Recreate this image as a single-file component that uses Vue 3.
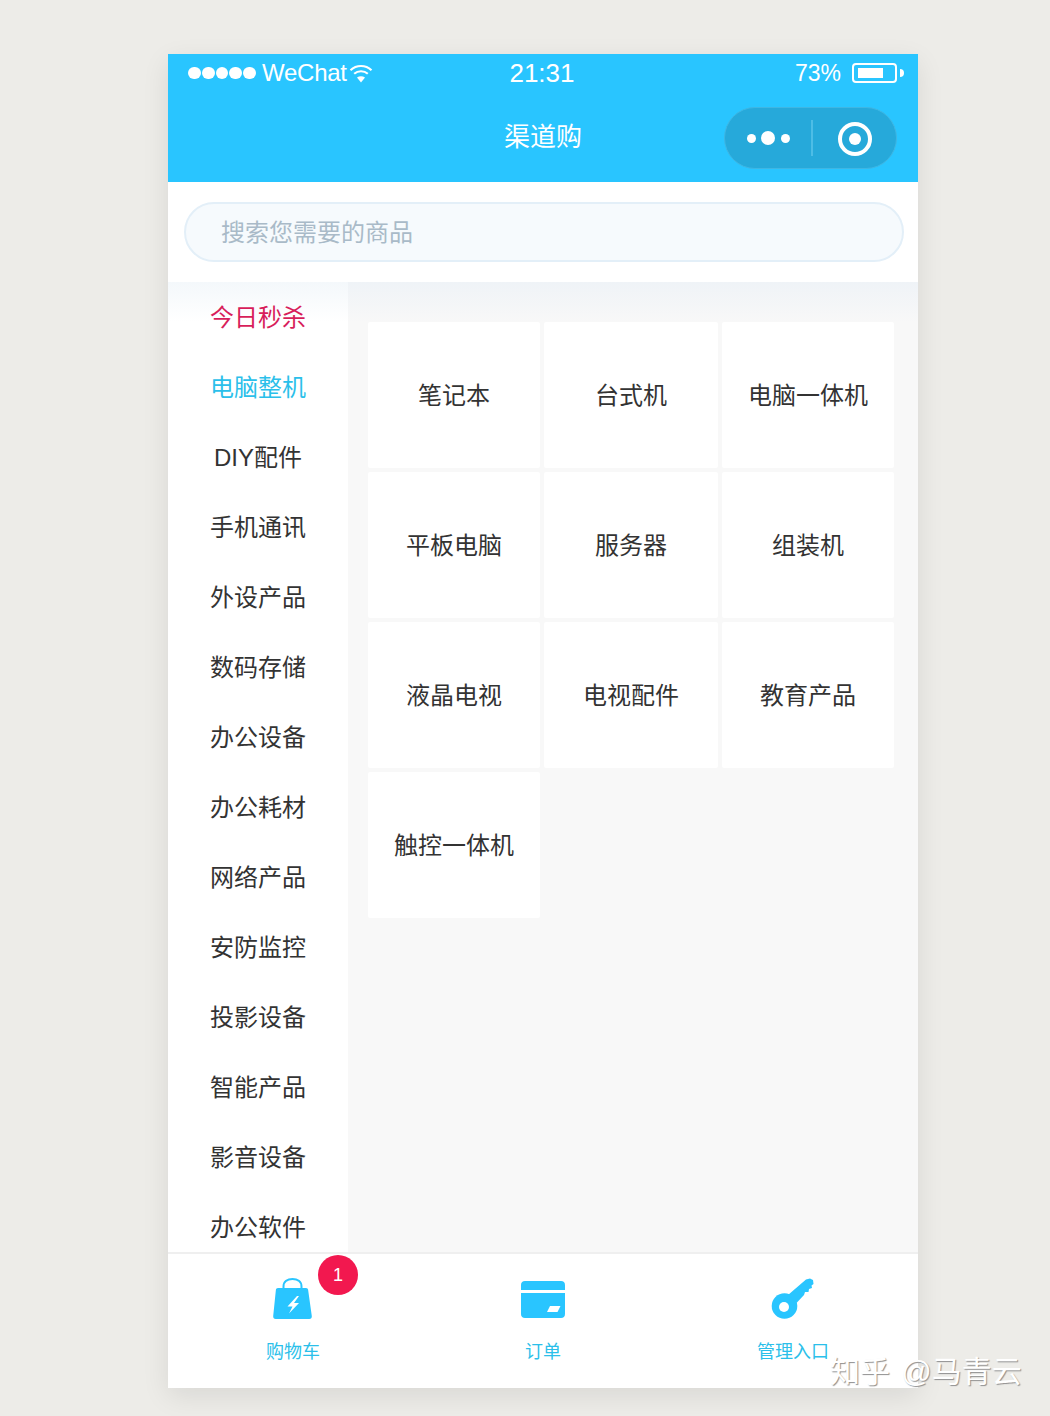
<script setup>
const categories = ['今日秒杀','电脑整机','DIY配件','手机通讯','外设产品','数码存储','办公设备','办公耗材','网络产品','安防监控','投影设备','智能产品','影音设备','办公软件']
const products = ['笔记本','台式机','电脑一体机','平板电脑','服务器','组装机','液晶电视','电视配件','教育产品','触控一体机']
</script>

<template>
  <div class="page">
    <div class="phone">
      <header class="header">
        <div class="status">
          <div class="status-left">
            <span class="signal"><i></i><i></i><i></i><i></i><i></i></span>
            <span class="carrier">WeChat</span>
            <svg class="wifi" width="24" height="20" viewBox="0 0 24 20">
              <path d="M1.5 7.2C7.5 1.6 16.5 1.6 22.5 7.2" fill="none" stroke="#fff" stroke-width="2.2"/>
              <path d="M5.2 10.8C9 7.4 15 7.4 18.8 10.8" fill="none" stroke="#fff" stroke-width="2.2"/>
              <path d="M12 19.5L8 14.6C10.4 12.8 13.6 12.8 16 14.6Z" fill="#fff"/>
            </svg>
          </div>
          <div class="time">21:31</div>
          <div class="status-right">
            <span class="percent">73%</span>
            <span class="battery"><span class="battery-fill"></span></span>
            <span class="battery-tip"></span>
          </div>
        </div>
        <div class="nav">
          <div class="title">渠道购</div>
          <div class="capsule">
            <span class="dots"><i></i><i class="big"></i><i></i></span>
            <span class="divider"></span>
            <span class="ring"><i></i></span>
          </div>
        </div>
      </header>

      <div class="search-wrap">
        <div class="search">搜索您需要的商品</div>
      </div>

      <main class="body">
        <aside class="sidebar">
          <div
            v-for="(c, i) in categories"
            :key="c"
            class="cat"
            :class="{ hot: i === 0, active: i === 1 }"
          >{{ c }}</div>
        </aside>
        <section class="content">
          <div class="grid">
            <div v-for="p in products" :key="p" class="cell">{{ p }}</div>
          </div>
        </section>
      </main>

      <footer class="tabs">
        <div class="tab">
          <div class="icon-wrap">
            <svg width="40" height="44" viewBox="0 0 40 44">
              <path d="M10.500 11.500V9.500C10.500 4.500 14.500 2 19.500 2S28.500 4.500 28.500 9.500V11.500" fill="none" stroke="#29c5ff" stroke-width="2"/>
              <path d="M5 11H33C34.200 11 34.900 11.700 35.100 12.800L38.800 39C39 40.800 38 42 36.300 42H2.700C1 42 0 40.800 .2 39L2.900 12.800C3.100 11.700 3.800 11 5 11Z" fill="#29c5ff"/>
              <path d="M24 19L14.500 29.500H19.500L16 36.500L26 26H21L26 19Z" fill="#fff"/>
            </svg>
            <span class="badge">1</span>
          </div>
          <div class="tab-label">购物车</div>
        </div>
        <div class="tab">
          <div class="icon-wrap">
            <svg width="44" height="38" viewBox="0 0 44 38">
              <path d="M0 10V5C0 2.500 1.500 1 4 1H40C42.500 1 44 2.500 44 5V10Z" fill="#29c5ff"/>
              <path d="M0 13H44V34C44 36.500 42.500 38 40 38H4C1.500 38 0 36.500 0 34Z" fill="#29c5ff"/>
              <path d="M29 26H39.500L36.500 32H26Z" fill="#fff"/>
            </svg>
          </div>
          <div class="tab-label">订单</div>
        </div>
        <div class="tab">
          <div class="icon-wrap">
            <svg width="44" height="42" viewBox="0 0 44 42">
              <circle cx="13.500" cy="28" r="12.800" fill="#29c5ff"/>
              <path d="M17 17L35 1.500L39 .5L42 2L42.500 6L40.500 7.500L41 10L38 11L37.500 14L34 14L33 17L25.500 25Z" fill="#29c5ff"/>
              <circle cx="13" cy="29" r="5" fill="#fff"/>
            </svg>
          </div>
          <div class="tab-label">管理入口</div>
        </div>
      </footer>
    </div>
    <div class="watermark">知乎 @马青云</div>
  </div>
</template>

<style>
html, body { margin: 0; background: #edece8; }
</style>

<style scoped>
.page {
  position: relative;
  width: 1050px;
  height: 1416px;
  box-sizing: border-box;
  padding: 54px 132px 28px 168px;
  background: #edece8;
  overflow: hidden;
  font-family: "Liberation Sans", "Noto Sans CJK SC", sans-serif;
}
.phone {
  display: flex;
  flex-direction: column;
  height: 1334px;
  background: #fff;
  box-shadow: 0 8px 26px rgba(0, 0, 0, 0.09);
}
.header { height: 128px; background: #29c5ff; color: #fff; flex: none; }
.status {
  display: grid;
  grid-template-columns: 1fr auto 1fr;
  align-items: center;
  height: 38px;
  padding: 0 14px 0 20px;
}
.status-left, .status-right { display: flex; align-items: center; }
.status-right { justify-content: flex-end; }
.signal { display: flex; gap: 1px; margin-right: 6px; }
.signal i { width: 12.800px; height: 12.800px; border-radius: 50%; background: #fff; }
.carrier { font-size: 24px; line-height: 38px; letter-spacing: -0.25px; }
.wifi { margin-left: 2px; }
.time { font-size: 26px; line-height: 38px; margin-right: 8px; }
.percent { font-size: 23px; line-height: 38px; margin-right: 11px; }
.battery {
  display: block;
  box-sizing: border-box;
  width: 45px;
  height: 20px;
  border: 2px solid #fff;
  border-radius: 4px;
  padding: 3px 4px;
}
.battery-fill { display: block; width: 25px; height: 100%; background: #fff; }
.battery-tip { width: 4px; height: 8px; margin-left: 3px; background: #fff; border-radius: 0 4px 4px 0; }
.nav {
  position: relative;
  display: flex;
  align-items: center;
  justify-content: center;
  height: 90px;
}
.title { font-size: 26px; line-height: 34px; }
.capsule {
  position: absolute;
  right: 21px;
  top: 15px;
  box-sizing: border-box;
  display: flex;
  align-items: center;
  width: 173px;
  height: 62px;
  border: 1px solid #3fb6e3;
  border-radius: 31px;
  background: #26a9da;
}
.dots { display: flex; align-items: center; gap: 5.500px; width: 86px; justify-content: center; }
.dots i { width: 9px; height: 9px; border-radius: 50%; background: #fff; }
.dots i.big { width: 14px; height: 14px; }
.divider { width: 2px; height: 36px; background: #4dbde6; }
.ring {
  box-sizing: border-box;
  display: flex;
  align-items: center;
  justify-content: center;
  width: 34px;
  height: 34px;
  margin: 1px 0 0 25px;
  border: 4px solid #fff;
  border-radius: 50%;
}
.ring i { width: 12px; height: 12px; border-radius: 50%; background: #fff; }

.search-wrap { flex: none; height: 100px; box-sizing: border-box; padding: 20px 14px 20px 16px; background: #fff; }
.search {
  box-sizing: border-box;
  height: 60px;
  padding-left: 35px;
  border: 2px solid #e3eff8;
  border-radius: 30px;
  background: #f6fafd;
  color: #a9bac8;
  font-size: 24px;
  line-height: 57px;
}

.body { flex: 1; display: flex; min-height: 0; overflow: hidden; }
.sidebar {
  flex: none;
  width: 180px;
  overflow: hidden;
  background: linear-gradient(#f4f8fb, #fff 40px);
}
.cat {
  height: 70px;
  line-height: 72px;
  text-align: center;
  font-size: 24px;
  color: #333;
}
.cat.hot { color: #d81e5b; }
.cat.active { color: #2bbfea; }
.content {
  flex: 1;
  box-sizing: border-box;
  padding: 40px 24px 0 20px;
  background: linear-gradient(#eff3f7, #f8f8f8 40px);
}
.grid {
  display: grid;
  grid-template-columns: 172px 174px 172px;
  grid-auto-rows: 146px;
  gap: 4px;
}
.cell {
  display: flex;
  align-items: center;
  justify-content: center;
  box-sizing: border-box;
  padding-bottom: 4px;
  background: #fff;
  border-radius: 2px;
  color: #333;
  font-size: 24px;
}

.tabs {
  flex: none;
  display: flex;
  box-sizing: border-box;
  height: 136px;
  background: #fff;
  border-top: 2px solid #efefef;
}
.tab { flex: 1; display: flex; flex-direction: column; align-items: center; }
.icon-wrap {
  position: relative;
  display: flex;
  align-items: center;
  justify-content: center;
  height: 44px;
  margin-top: 23px;
}
.badge {
  position: absolute;
  left: 45px;
  top: -22px;
  width: 40px;
  height: 40px;
  border-radius: 50%;
  background: #f2184f;
  color: #fff;
  font-size: 18px;
  line-height: 40px;
  text-align: center;
}
.tab-label { margin-top: 18px; font-size: 18px; line-height: 26px; color: #2bbfea; }
.watermark {
  position: absolute;
  left: 830px;
  top: 1352px;
  font-size: 30px;
  line-height: 40px;
  word-spacing: 3px;
  color: #fff;
  white-space: nowrap;
  text-shadow: 1px 1px 1px #8f8f8f;
}
</style>
